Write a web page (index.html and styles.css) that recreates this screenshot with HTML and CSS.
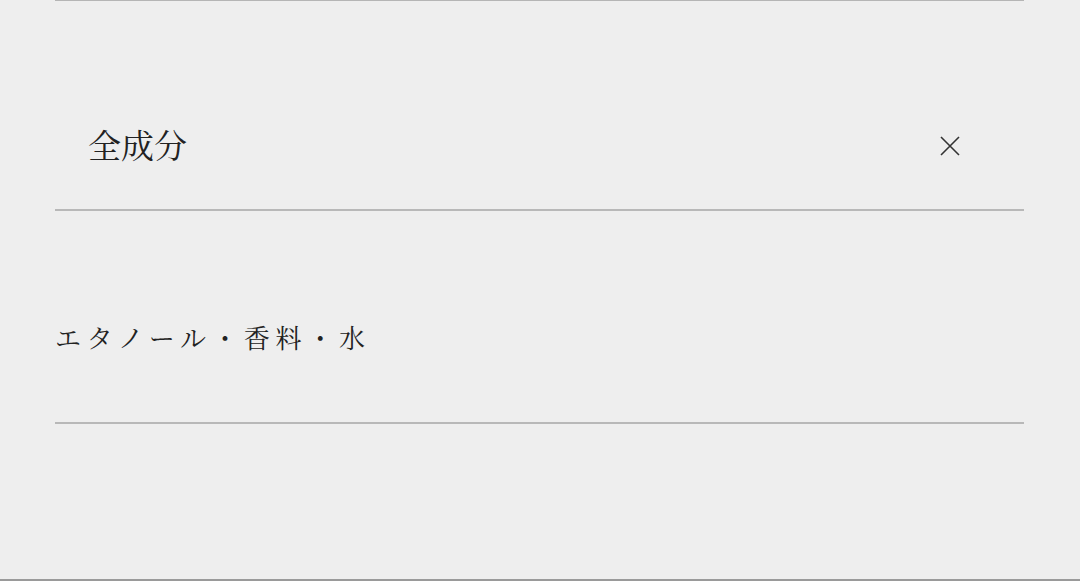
FILE: index.html
```html
<!DOCTYPE html>
<html lang="ja">
<head>
    <meta charset="UTF-8">
    <meta name="viewport" content="width=device-width, initial-scale=1.0">
    <title>全成分</title>
    <link rel="stylesheet" href="styles.css">
</head>
<body>
    <section class="panel">
        <div class="panel-head">
            <h2>全成分</h2>
            <button class="close-btn" aria-label="閉じる">
                <svg width="20" height="20" viewBox="0 0 20 20">
                    <path d="M1 1 L19 19 M19 1 L1 19" stroke="#333" stroke-width="1.6" fill="none"/>
                </svg>
            </button>
        </div>
        <div class="panel-body">
            <p>エタノール・香料・水</p>
        </div>
    </section>
</body>
</html>
```

FILE: styles.css
```css
* {
    margin: 0;
    padding: 0;
    box-sizing: border-box;
}
body {
    background-color: #eeeeee;
    min-height: 100vh;
    border-bottom: 2px solid #9a9a9a;
    font-family: "Noto Serif CJK JP", "Noto Sans CJK JP", serif;
    color: #222;
}
.panel {
    margin: 0 56px 0 55px;
    border-top: 1px solid #b5b5b5;
}
.panel-head {
    height: 210px;
    display: flex;
    align-items: center;
    justify-content: space-between;
    padding: 0 64px 0 33px;
    border-bottom: 2px solid #b8b8b8;
}
.panel-head h2 {
    font-size: 33px;
    font-weight: normal;
    line-height: 1;
    margin-top: 76px;
}
.close-btn {
    background: none;
    border: none;
    display: flex;
    margin-top: 82px;
    cursor: pointer;
}
.panel-body {
    height: 213px;
    display: flex;
    align-items: center;
    border-bottom: 2px solid #b8b8b8;
}
.panel-body p {
    font-size: 26px;
    letter-spacing: 5.8px;
    line-height: 1;
    margin-top: 40px;
}
```
